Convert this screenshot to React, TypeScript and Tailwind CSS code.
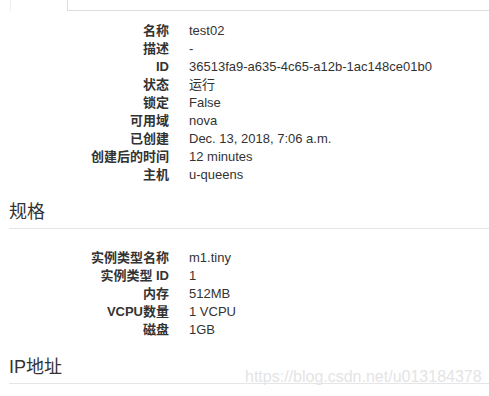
const font = "font-['Liberation_Sans','Noto_Sans_CJK_SC',sans-serif]";

const overview: [string, string][] = [
  ["名称", "test02"],
  ["描述", "-"],
  ["ID", "36513fa9-a635-4c65-a12b-1ac148ce01b0"],
  ["状态", "运行"],
  ["锁定", "False"],
  ["可用域", "nova"],
  ["已创建", "Dec. 13, 2018, 7:06 a.m."],
  ["创建后的时间", "12 minutes"],
  ["主机", "u-queens"],
];

const specs: [string, string][] = [
  ["实例类型名称", "m1.tiny"],
  ["实例类型 ID", "1"],
  ["内存", "512MB"],
  ["VCPU数量", "1 VCPU"],
  ["磁盘", "1GB"],
];

const DetailList = ({ rows }: { rows: [string, string][] }) => (
  <dl className="text-[13px] leading-[18px]">
    {rows.map(([k, v]) => (
      <div key={k} className="flex">
        <dt className="w-[160px] text-right font-bold text-[#333]">{k}</dt>
        <dd className="ml-[20px] text-[#333]">{v}</dd>
      </div>
    ))}
  </dl>
);

const Heading = ({ children }: { children: string }) => (
  <h4 className="mt-[18px] text-[18px] leading-[20px] pb-[6px] border-b border-[#e5e5e5] text-[#333]">
    {children}
  </h4>
);

export default function App() {
  return (
    <div className={`relative w-[489px] h-[396px] overflow-hidden bg-white ${font}`}>
      {/* tabs strip */}
      <div className="flex h-[11px]">
        <div className="w-[10px] shrink-0" />
        <div className="w-[57px] shrink-0 border-l border-[#eeeeee]" />
        <div className="flex-1 border-l border-b border-[#dddddd]" />
      </div>

      <div className="pl-[9px] pt-[11px]">
        <DetailList rows={overview} />
        <Heading>规格</Heading>
        <div className="mt-[20px]">
          <DetailList rows={specs} />
        </div>
        <Heading>IP地址</Heading>
      </div>

      <div className="absolute left-[245px] top-[367px] text-[16px] leading-[20px] text-[#e4e4e4] font-['Liberation_Sans',sans-serif]">
        https://blog.csdn.net/u013184378
      </div>
    </div>
  );
}
